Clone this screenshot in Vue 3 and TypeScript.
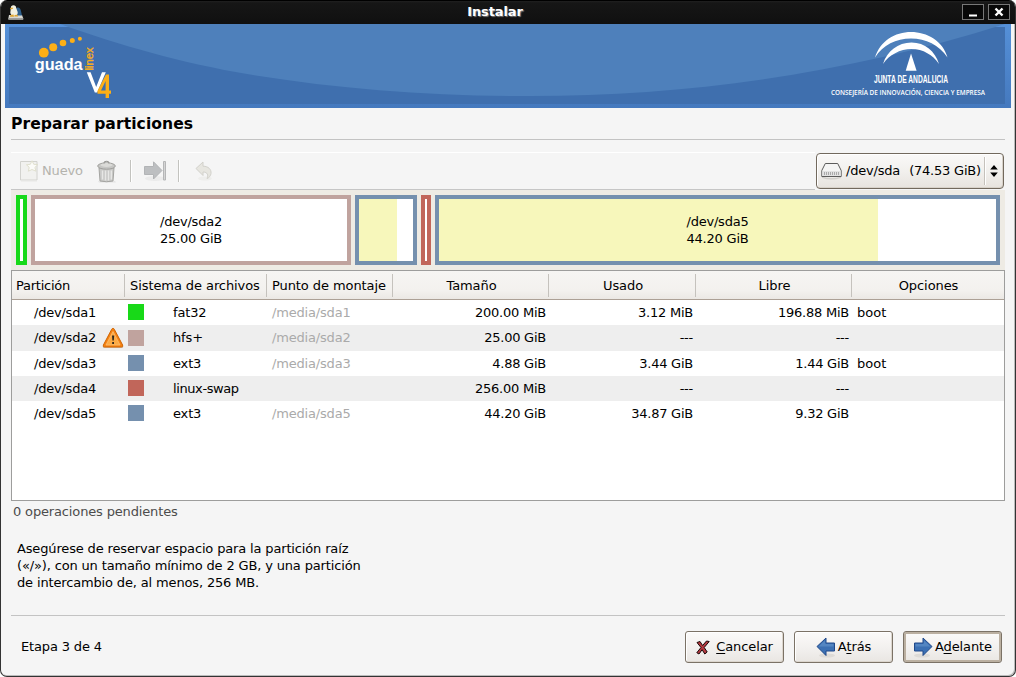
<script setup lang="ts">
interface Row {
  name: string
  color: string
  fs: string
  mount: string
  size: string
  used: string
  free: string
  flags: string
  warn?: boolean
}

interface Block {
  id: string
  width: number
  color: string
  used: number
  label?: string
  size?: string
}

const headers: string[] = ['Partición', 'Sistema de archivos', 'Punto de montaje', 'Tamaño', 'Usado', 'Libre', 'Opciones']

const rows: Row[] = [
  { name: '/dev/sda1', color: '#18d918', fs: 'fat32', mount: '/media/sda1', size: '200.00 MiB', used: '3.12 MiB', free: '196.88 MiB', flags: 'boot' },
  { name: '/dev/sda2', color: '#c0a39e', fs: 'hfs+', mount: '/media/sda2', size: '25.00 GiB', used: '---', free: '---', flags: '', warn: true },
  { name: '/dev/sda3', color: '#7590ae', fs: 'ext3', mount: '/media/sda3', size: '4.88 GiB', used: '3.44 GiB', free: '1.44 GiB', flags: 'boot' },
  { name: '/dev/sda4', color: '#c1665a', fs: 'linux-swap', mount: '', size: '256.00 MiB', used: '---', free: '---', flags: '' },
  { name: '/dev/sda5', color: '#7590ae', fs: 'ext3', mount: '/media/sda5', size: '44.20 GiB', used: '34.87 GiB', free: '9.32 GiB', flags: '' },
]

const blocks: Block[] = [
  { id: 'sda1', width: 11, color: '#18d918', used: 0 },
  { id: 'sda2', width: 320, color: '#c0a39e', used: 0, label: '/dev/sda2', size: '25.00 GiB' },
  { id: 'sda3', width: 62, color: '#7590ae', used: 38 },
  { id: 'sda4', width: 10, color: '#c1665a', used: 0 },
  { id: 'sda5', width: 565, color: '#7590ae', used: 439, label: '/dev/sda5', size: '44.20 GiB' },
]
</script>

<template>
  <div class="window">
    <header class="titlebar">
      <svg class="app-icon" width="16" height="16" viewBox="0 0 16 16">
        <path d="M1 10h13l1.200 3.200v1.600H.4v-1.600z" fill="#d8d8d2" />
        <path d="M1 13.300h14v1.500H1z" fill="#8b8b88" />
        <path d="M7.500 4c2-2.500 4.500-1.500 5.200 1l1.300 5.500H8.500z" fill="#2d5f8c" />
        <path d="M3 1.500C4.800-.4 8.200 0 8.200 3L9.500 6.500c.8 2.200-.6 4.500-3.300 4.500S1.800 9 2.400 6.700z" fill="#f2f0df" />
        <path d="M2 3l2.500-.5.600 1.300-2.400.7zM2.500 10l3-.5.500 2.200H2zM6.500 10l3-.3.500 1.800H6.500z" fill="#dfa52e" />
      </svg>
      <h1>Instalar</h1>
      <div class="controls">
        <button class="ctl" aria-label="Minimizar">
          <svg width="20" height="14" viewBox="0 0 20 14"><path d="M6 9.500h8v2H6z" fill="#fff" /></svg>
        </button>
        <button class="ctl" aria-label="Cerrar">
          <svg width="20" height="14" viewBox="0 0 20 14"><path d="M6.500 3.500l7 7M13.500 3.500l-7 7" stroke="#fff" stroke-width="2.400" fill="none" /></svg>
        </button>
      </div>
    </header>

    <svg class="banner" width="1006" height="84" viewBox="5 24 1006 84">
      <defs>
        <linearGradient id="edge" x1="0" y1="0" x2="0" y2="1">
          <stop offset="0" stop-color="#5590d8" />
          <stop offset="1" stop-color="#4579be" />
        </linearGradient>
      </defs>
      <path d="M5 24h1006v84H5z" fill="url(#edge)" />
      <path d="M9 27h996v77H9z" fill="#3f6fae" />
      <path d="M60 24C120 45 180 63 250 74.500C340 89 430 96 530 96C690 96 850 73 1005 24z" fill="#4e80bb" />
      <g fill="#fcaf17">
        <circle cx="43.800" cy="52.700" r="4.900" />
        <circle cx="53.200" cy="47.200" r="4" />
        <circle cx="63" cy="43" r="3.300" />
        <circle cx="72.300" cy="40.400" r="2.500" />
        <circle cx="79.900" cy="38.800" r="2" />
      </g>
      <text x="34.700" y="69.800" class="logo-word" textLength="48" lengthAdjust="spacingAndGlyphs">guada</text>
      <text transform="translate(92.700 70.500) rotate(-90)" class="logo-side" textLength="23" lengthAdjust="spacingAndGlyphs">linex</text>
      <path d="M86.800 72.200h3.800l5.600 14.800L102 72.200h3.800L97.200 92.500h-2.400z" fill="#fff" />
      <path d="M106 74.500h3v16h2v3.200h-2v4.300h-3.400v-4.300H97.500v-3zM105.600 81l-4.600 9.500h4.600z" fill="#fcaf17" fill-rule="evenodd" />
      <path d="M875 57.500C880 41 895 32 911 32s32 9 36.500 25.500C939 45 926 38.500 911 38.500S883 45 875 57.500z" fill="#fff" />
      <path d="M883 64c4-13 15-21.500 28.500-21.500S935 51 939 64c-6-9-16-15-27.500-15S889 55 883 64z" fill="#fff" />
      <path d="M911 53.500l5.600 17.200h-10.900z" fill="#fff" />
      <text x="874" y="82.700" class="junta" textLength="74" lengthAdjust="spacingAndGlyphs">JUNTA DE ANDALUCIA</text>
      <text x="831" y="94.700" class="dept" textLength="154" lengthAdjust="spacingAndGlyphs">CONSEJERÍA DE INNOVACIÓN, CIENCIA Y EMPRESA</text>
    </svg>

    <main class="content">
      <h2>Preparar particiones</h2>

      <div class="toolrow">
        <div class="toolbar">
          <svg class="t-new" width="20" height="22" viewBox="0 0 20 22">
            <path d="M1.500 1.500h16.500v18.500h-16.500z" fill="#f1f1ef" stroke="#d2d2ce" />
            <path d="M2 21h16" stroke="#e8e8e6" />
            <path d="M13 .8l1.800 3.500 4 .3-2.900 2.800 1 3.800-3.900-1.700-3.600 1.700.8-3.900L7.500 4.800l3.800-.5z" fill="#fbfbf8" stroke="#dddcc9" stroke-width=".9" />
          </svg>
          <span class="t-label">Nuevo</span>
          <svg class="t-trash" width="22" height="23" viewBox="0 0 22 23">
            <path d="M2 21h17l1 1.500H3z" fill="#e4e4e4" />
            <path d="M3 8h15l-1 13q-6.500 1.500-13 0z" fill="#c9c9c7" stroke="#a4a4a1" />
            <path d="M6.500 10.500v9M9.500 10.500v10M12.500 10.500v10M15.300 10.500v9" stroke="#e7e7e5" stroke-width="1.400" />
            <ellipse cx="10.500" cy="6" rx="8.800" ry="3.200" fill="#c6c6c4" stroke="#a0a09d" />
            <ellipse cx="10.500" cy="5" rx="6" ry="1.900" fill="#dbdbd8" />
            <path d="M8 3.500c0-3 5-3 5 0" fill="none" stroke="#999996" stroke-width="1.200" />
          </svg>
          <i class="sep sep-a"></i>
          <svg class="t-resize" width="24" height="22" viewBox="0 0 24 22">
            <ellipse cx="12" cy="18.500" rx="10" ry="2.500" fill="#ebebeb" />
            <path d="M1.500 6.500h9V1.800l8.500 8.700-8.500 8.500v-4.500h-9z" fill="#bdbfc1" stroke="#b2b4b6" />
            <path d="M20.500 1.500h2v18.500h-2z" fill="#d5d5d5" stroke="#b5b6b7" />
          </svg>
          <i class="sep sep-b"></i>
          <svg class="t-undo" width="18" height="20" viewBox="0 0 18 20">
            <ellipse cx="10" cy="17.500" rx="7" ry="2" fill="#eeeeec" />
            <path d="M1 7.500L8 1v4.200c5.500 0 8.500 3.300 8 7.300-.3 2.500-2 4.300-4 5 1.500-3 .8-6.500-4-6.500v3.500z" fill="#e7e6e0" stroke="#d2d1cb" />
          </svg>
        </div>
        <button class="combo">
          <svg class="disk" width="21" height="18" viewBox="0 0 21 18">
            <path d="M1 14.500q9.500 3 19 0v1.500q-9.500 3-19 0z" fill="#d1cfcb" />
            <path d="M4.300 1.500h12.400l3.500 7v6H.8v-6z" fill="#f5f5f4" stroke="#5c5c5b" stroke-linejoin="round" />
            <path d="M1.300 9h18.400v5H1.300z" fill="#e2e2e2" />
            <path d="M3 11.500h15" stroke="#aaa" stroke-width="3" stroke-dasharray="1 1" />
          </svg>
          <span class="dev">/dev/sda</span><span class="cap">(74.53 GiB)</span>
          <i class="combo-sep"></i>
          <svg class="arrows" width="8" height="12" viewBox="0 0 8 12"><path d="M4 0l3.800 4.500H.2zM4 12l3.800-4.500H.2z" fill="#000" /></svg>
        </button>
      </div>

      <div class="diskmap">
        <div v-for="b in blocks" :key="b.id" class="block" :style="{ width: b.width + 'px', borderColor: b.color }">
          <div class="fill" :style="{ width: b.used + 'px' }"></div>
          <div v-if="b.label" class="block-text">{{ b.label }}<br />{{ b.size }}</div>
        </div>
      </div>

      <div class="table">
        <div class="thead grid">
          <div v-for="h in headers" :key="h" class="th"><span>{{ h }}</span></div>
        </div>
        <div v-for="r in rows" :key="r.name" class="tr grid" :class="{ tall: r.warn }">
          <div class="td name">
            <span>{{ r.name }}</span>
            <svg v-if="r.warn" class="warn" width="22" height="22" viewBox="0 0 22 22">
              <path d="M1 19.500h20v1.500H1z" fill="#b9a58c" opacity=".6" />
              <path d="M11 1.300q.8 0 1.300 1L20.600 18q.8 2-1.100 2H2.500q-1.900 0-1.100-2L9.700 2.300q.5-1 1.300-1z" fill="#f58212" stroke="#cf6504" />
              <path d="M11 4.500L18 18H4z" fill="#fcab45" stroke="#fbbd72" stroke-width=".8" />
              <path d="M10 8.500h2.200l-.4 5h-1.400zM10.200 15h1.800v1.900h-1.800z" fill="#33291d" />
            </svg>
          </div>
          <div class="td fs"><i class="swatch" :style="{ background: r.color }"></i><span :class="{ long: r.fs.length > 6 }">{{ r.fs }}</span></div>
          <div class="td mount">{{ r.mount }}</div>
          <div class="td num">{{ r.size }}</div>
          <div class="td num">{{ r.used }}</div>
          <div class="td num">{{ r.free }}</div>
          <div class="td flags">{{ r.flags }}</div>
        </div>
      </div>

      <p class="pending">0 operaciones pendientes</p>
      <p class="hint">Asegúrese de reservar espacio para la partición raíz<br />(«/»), con un tamaño mínimo de 2 GB, y una partición<br />de intercambio de, al menos, 256 MB.</p>
    </main>

    <footer class="footer">
      <span class="step">Etapa 3 de 4</span>
      <button class="btn cancel">
        <svg width="14" height="15" viewBox="0 0 14 15">
          <path d="M1 2.500l3-1 2.600 4L10.500 1l2.700.5-5 6 3 4.500-2.400 2-2.700-4.300L3 14l-2.200-1.300L5 7.500z" fill="#b63a40" stroke="#1a0808" stroke-linejoin="round" />
        </svg>
        <span><u>C</u>ancelar</span>
      </button>
      <button class="btn back">
        <svg width="20" height="21" viewBox="0 0 20 21">
          <ellipse cx="11" cy="18.500" rx="8" ry="2" fill="#dedbd7" />
          <path d="M1 9.500L10 1v5h8.500v8H10v4.500z" fill="#3c70b3" stroke="#20498a" />
          <path d="M2.500 9.500L9.200 3.200V7h8.300v2.500z" fill="#6c9bd2" opacity=".5" />
        </svg>
        <span>A<u>t</u>rás</span>
      </button>
      <button class="btn next">
        <svg width="20" height="21" viewBox="0 0 20 21">
          <ellipse cx="9" cy="18.500" rx="8" ry="2" fill="#dedbd7" />
          <path d="M19 9.500L10 1v5H1.500v8H10v4.500z" fill="#3c70b3" stroke="#20498a" />
          <path d="M17.500 9.500L10.800 3.200V7H2.500v2.500z" fill="#6c9bd2" opacity=".5" />
        </svg>
        <span>A<u>d</u>elante</span>
      </button>
    </footer>
  </div>
</template>

<style>
body { background: #fff; }
</style>

<style scoped>
* { box-sizing: border-box; }
.window {
  width: 1016px; height: 677px; display: flex; flex-direction: column;
  background: #f5f5f5; border: solid #333; border-width: 0 1px 1px; border-radius: 7px;
  box-shadow: inset -1px -1px #bbb; overflow: hidden;
  font: 13px/17px "DejaVu Sans", sans-serif; color: #000;
}
button { font: inherit; color: inherit; padding: 0; margin: 0; }
svg { display: block; flex: none; }
.titlebar {
  height: 24px; flex: none; margin: 0 -1px; padding: 0 6px 0 8px; display: grid;
  grid-template-columns: 48px 1fr 48px; align-items: center;
  background: linear-gradient(#000, #000 1px, #202020 1px, #161616 3px, #101010);
}
.app-icon { margin-top: 1px; }
.titlebar h1 { margin: 0 0 1px; padding-right: 28px; text-align: center; font-size: 13px; line-height: 17px; font-weight: bold; letter-spacing: -.1px; color: #fff; text-shadow: 1px 1px 1px #777; }
.controls { display: flex; gap: 4px; }
.ctl { width: 22px; height: 16px; border: 1px solid #777; background: #080808; }
.banner { margin-left: 4px; flex: none; }
.content { margin: 0 10px; }
h2 { margin: 0; height: 32px; padding-top: 7px; border-bottom: 1px solid #c3c3c3; font-size: 15.600px; line-height: 19px; font-weight: bold; letter-spacing: .05px; }
.toolrow { display: flex; justify-content: space-between; margin-top: 12px; height: 38px; }
.toolbar { width: 804px; border-top: 1px solid #fff; border-bottom: 1px solid #c6c6c6; display: flex; align-items: center; padding-left: 8px; }
.t-label { margin-left: 3px; padding-bottom: 2px; color: #b4b3ad; width: 42px; letter-spacing: -.15px; }
.t-trash { margin-left: 12px; }
.sep { width: 2px; height: 22px; background: #c3c3bf; border-right: 1px solid #fff; }
.sep-a { margin-left: 12px; }
.t-resize { margin-left: 11px; }
.sep-b { margin-left: 11px; }
.t-undo { margin-left: 15px; }
.combo {
  width: 188px; height: 36px; margin: 1px 1px 0 0; display: flex; align-items: center;
  border: 1px solid #72695d; border-radius: 4px; padding-left: 4px; white-space: nowrap;
  background: linear-gradient(#faf9f8, #f1efec 55%, #e7e3de); box-shadow: inset 1px 1px #fff, inset -1px -1px #d8d2ca;
}
.dev, .cap { padding-bottom: 2px; letter-spacing: -.22px; flex: none; }
.dev { margin-left: 4px; width: 54px; }
.cap { margin-left: 9px; width: 72px; }
.combo-sep { width: 2px; height: 28px; background: #c5c1bb; border-right: 1px solid #fff; margin-left: 3px; }
.arrows { margin-left: 4px; }
.diskmap { height: 80px; padding: 5px; display: flex; gap: 4px; background: #eeebe4; }
.block { height: 70px; border: 4px solid; background: #fff; display: grid; }
.fill { height: 62px; background: #f7f7bb; grid-area: 1 / 1; }
.block-text { grid-area: 1 / 1; text-align: center; align-self: center; padding-top: 7px; height: 48px; letter-spacing: -.22px; }
.table { height: 231px; border: 1px solid #9d9d9c; background: #fff; }
.grid { display: grid; grid-template-columns: 113px 142px 126px 156px 147px 156px 152px; }
.thead { height: 29px; background: linear-gradient(#f6f5f3, #f3f1ee 70%, #ebe8e4); border-bottom: 1px solid #aca095; letter-spacing: -.08px; }
.th { display: flex; align-items: center; justify-content: center; padding-top: 1px; padding-left: 1px; }
.th span { flex: none; }
.th:nth-child(-n + 3) { justify-content: flex-start; padding-left: 5px; }
.th:first-child { padding-left: 4px; letter-spacing: -.25px; }
.th:not(:last-child) { background: linear-gradient(#c5c2bd, #c5c2bd) right 0 center / 1px 23px no-repeat; }
.tr { height: 25px; }
.tr:nth-child(odd) { background: #eee; }
.tall { height: 26px; }
.tall .td { padding-bottom: 1px; }
.td { display: flex; align-items: center; white-space: pre; }
.name { padding-left: 22px; letter-spacing: -.22px; }
.warn { margin: 1px 0 0 6px; }
.fs { padding-left: 3px; letter-spacing: -.15px; }
.long { letter-spacing: -.4px; }
.swatch { width: 16px; height: 16px; margin: 0 29px 1px 0; flex: none; }
.tall .swatch { margin: 1px 29px 0 0; }
.mount { color: #aaa; padding-left: 5px; letter-spacing: -.18px; }
.num { justify-content: flex-end; padding-right: 3px; letter-spacing: -.24px; }
.flags { padding-left: 5px; }
.pending { margin: 2px 0 0 2px; color: #4c4c4c; letter-spacing: -.15px; }
.hint { margin: 20px 0 0 6px; letter-spacing: -.15px; }
.footer { margin: 24px 10px 0; border-top: 1px solid #c3c3c3; height: 61px; display: flex; align-items: flex-start; padding-top: 15px; }
.step { margin: 7px auto 0 10px; letter-spacing: -.15px; }
.btn {
  width: 99px; height: 32px; display: flex; align-items: center; justify-content: center;
  border: 1px solid #7b7266; border-radius: 3px; background: linear-gradient(#fbfaf9, #f1efed 60%, #e9e6e2);
  box-shadow: inset 1px 1px #fff, inset -1px -1px #dcd6ce;
}
.btn span { padding-bottom: 2px; letter-spacing: -.1px; }
.btn u { text-decoration: underline; text-underline-offset: 2px; }
.cancel svg { margin-right: 6px; }
.back { margin-left: 10px; }
.back svg, .next svg { margin-right: 2px; }
.next { margin: 0 3px 0 10px; box-shadow: inset 0 0 0 2px #bbb0a1; }
.logo-word { font: bold 17px "Liberation Sans", sans-serif; fill: #fff; }
.logo-side { font: 10.500px "Liberation Sans", sans-serif; fill: #fcaf17; stroke: #fcaf17; stroke-width: .3; }
.junta { font: bold 10px "Liberation Sans", sans-serif; fill: #fff; }
.dept { font: 600 7px "Open Sans", sans-serif; fill: #fff; }
</style>
